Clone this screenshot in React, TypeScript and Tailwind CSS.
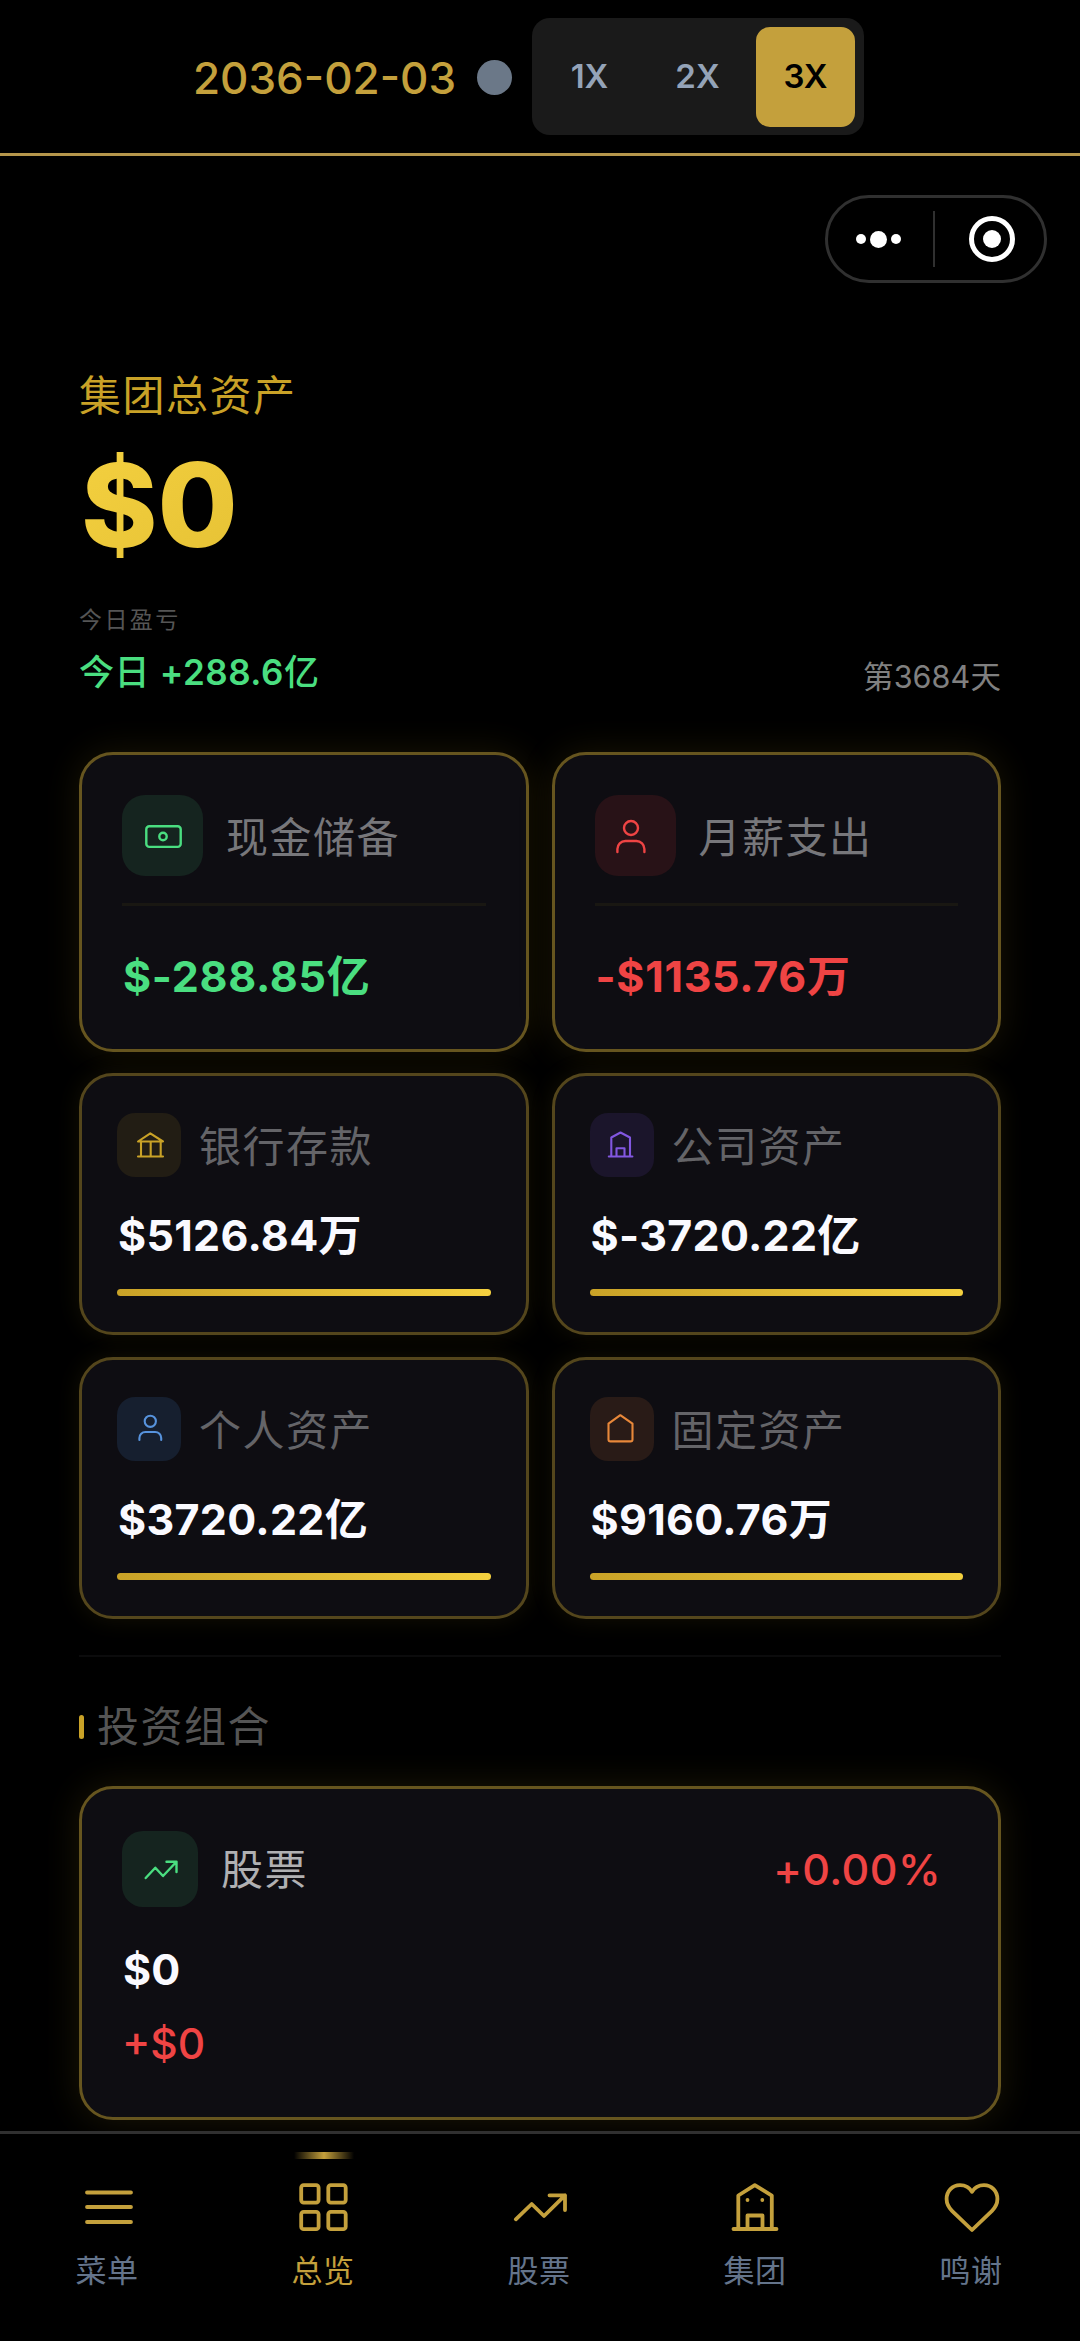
import React from 'react';

interface IconProps {
  size: number;
  className?: string;
  strokeWidth?: number;
  children: React.ReactNode;
}

const Icon: React.FC<IconProps> = ({ size, className = '', strokeWidth = 2.4, children }) => (
  <svg
    xmlns="http://www.w3.org/2000/svg"
    width={size}
    height={size}
    viewBox={`0 0 ${size} ${size}`}
    fill="none"
    stroke="currentColor"
    strokeWidth={strokeWidth}
    strokeLinecap="round"
    strokeLinejoin="round"
    className={`shrink-0 ${className}`}
  >
    {children}
  </svg>
);

const speeds = ['1X', '2X', '3X'];

const topCards = [
  {
    label: '现金储备',
    value: '$-288.85亿',
    color: 'text-[#4ade80]',
    box: 'bg-[#15241f]',
    icon: (
      <>
        <rect x="24.3" y="31.3" width="34.4" height="20.6" rx="3" />
        <circle cx="41" cy="41.5" r="3.7" />
      </>
    ),
  },
  {
    label: '月薪支出',
    value: '-$1135.76万',
    color: 'text-[#ef4444]',
    box: 'bg-[#281217]',
    icon: (
      <>
        <circle cx="36" cy="33" r="7" />
        <path d="M22.4 57v-3a8 8 0 0 1 8-8h11a8 8 0 0 1 8 8v3" />
      </>
    ),
  },
];

const assetCards = [
  {
    label: '银行存款',
    value: '$5126.84万',
    color: 'text-[#c9a227]',
    box: 'bg-[#221d14]',
    icon: <path d="M21 28.5 33.3 20.3 46 28.5ZM24 28.5v15M33.7 28.5v15M43.7 28.5v15M21 43.5h25" />,
  },
  {
    label: '公司资产',
    value: '$-3720.22亿',
    color: 'text-[#8257e0]',
    box: 'bg-[#1b152b]',
    icon: <path d="M18.8 43.5h23.6M21.3 43.5V24.5l9.2-5 9.5 5v19M26.5 43.5v-8.3h8v8.3" />,
  },
  {
    label: '个人资产',
    value: '$3720.22亿',
    color: 'text-[#5793dd]',
    box: 'bg-[#161f2f]',
    icon: (
      <>
        <circle cx="33.3" cy="24.3" r="5.6" />
        <path d="M22.4 43v-2a6 6 0 0 1 6-6h9.8a6 6 0 0 1 6 6v2" />
      </>
    ),
  },
  {
    label: '固定资产',
    value: '$9160.76万',
    color: 'text-[#e8883a]',
    box: 'bg-[#291b17]',
    icon: <path d="M18.5 26.7 30.3 18.2 42.5 26.7V42.4a2 2 0 0 1-2 2h-20a2 2 0 0 1-2-2Z" />,
  },
];

const tabs = [
  { label: '菜单', icon: <path d="M11 17.5h44M11 32h44M11 47h44" /> },
  {
    label: '总览',
    active: true,
    icon: (
      <>
        <rect x="9.2" y="10.2" width="17.4" height="17.4" rx="2.5" />
        <rect x="36.3" y="10.2" width="17.4" height="17.4" rx="2.5" />
        <rect x="9.2" y="36.8" width="17.4" height="17.4" rx="2.5" />
        <rect x="36.3" y="36.8" width="17.4" height="17.4" rx="2.5" />
      </>
    ),
  },
  { label: '股票', icon: <path d="M7.8 44.3 23.7 29 36 41 57 20.3M41.5 20.3H57V35" /> },
  {
    label: '集团',
    icon: (
      <>
        <path d="M9.5 54h43M14.3 54V20.5l16.5-10.3 17 10.3V54M23.5 54V40.5h15V54" />
        <path d="M23.5 25h.01M38.3 25h.01" />
      </>
    ),
  },
  {
    label: '鸣谢',
    icon: <path d="M32 16.8C29.5 12.5 25 10.2 20 10.2 12.3 10.2 6.6 16.2 6.6 24c0 5.5 2.3 8.7 5.4 11.8L32 55l20-19.2c3.1-3.1 5.4-6.3 5.4-11.8 0-7.8-5.7-13.8-13.4-13.8-5 0-9.5 2.3-12 6.6Z" />,
  },
];

const Header = () => (
  <header className="flex h-[156px] shrink-0 items-center border-b-3 border-[#b5964b] pl-[193px]">
    <span className="w-[284px] pt-0.5 text-[44px] leading-[60px] font-medium text-[#c4a03c]">2036-02-03</span>
    <span className="mt-0.5 size-[35px] rounded-full bg-[#6b7888]" />
    <div className="ml-5 flex gap-[9px] rounded-[18px] bg-[#1a1a1a] py-[8.5px] pr-[9px] pl-2">
      {speeds.map((speed) => (
        <button
          key={speed}
          className={`h-[100px] w-[99px] rounded-[14px] text-[33px] font-semibold ${
            speed === '3X' ? 'bg-[#c4a03c] text-black' : 'text-[#94a3b8]'
          }`}
        >
          {speed}
        </button>
      ))}
    </div>
  </header>
);

const Capsule = () => (
  <div className="flex h-[88px] w-[222px] items-center rounded-full border-3 border-[#303030]">
    <div className="flex flex-1 items-center justify-center gap-1 pr-1">
      <span className="size-[10px] rounded-full bg-white" />
      <span className="size-[17px] rounded-full bg-white" />
      <span className="size-[10px] rounded-full bg-white" />
    </div>
    <span className="h-14 w-0.5 bg-[#303030]" />
    <div className="flex w-[109px] justify-center pl-1">
      <span className="flex size-[46px] items-center justify-center rounded-full border-5 border-white">
        <span className="size-[18px] rounded-full bg-white" />
      </span>
    </div>
  </div>
);

const TabBar = () => (
  <nav className="z-10 grid h-[210px] shrink-0 grid-cols-5 border-t-3 border-[#303030] bg-black">
    {tabs.map((tab) => (
      <button key={tab.label} className="relative flex flex-col items-center pt-[41px]">
        {tab.active && (
          <span className="absolute top-[18px] left-1/2 h-[7px] w-[60px] -translate-x-1/2 bg-linear-to-r from-transparent via-[#c4a03c] to-transparent" />
        )}
        <Icon size={64} strokeWidth={3.8} className="text-[#c4a03c]">
          {tab.icon}
        </Icon>
        <span
          className={`mt-[14px] pr-0.5 text-[31px] leading-9 tracking-[0.6px] ${
            tab.active ? 'text-[#c4a03c]' : 'text-[#64748b]'
          }`}
        >
          {tab.label}
        </span>
      </button>
    ))}
  </nav>
);

export default function App() {
  return (
    <div className="flex h-[2341px] w-[1080px] flex-col overflow-hidden bg-black font-['Inter','Noto_Sans_CJK_SC',sans-serif]">
      <Header />

      <main className="min-h-0 flex-1 overflow-hidden px-[79px] pt-[39px]">
        <div className="-mr-[46px] flex justify-end">
          <Capsule />
        </div>

        <h1 className="mt-[83px] text-[42px] leading-[60px] font-normal tracking-[1.5px] text-[#c9a227]">集团总资产</h1>
        <div className="mt-[19px] w-fit bg-linear-to-br from-[#f4d03f] to-[#e6c235] bg-clip-text pl-0.5 text-[116px] leading-[120px] font-extrabold text-transparent">
          $0
        </div>
        <div className="mt-10 flex items-end justify-between">
          <div>
            <p className="text-[23px] leading-[30px] tracking-[2.4px] text-[#555555]">今日盈亏</p>
            <p className="mt-[15px] text-[35px] leading-[44px] font-medium tracking-[0.5px] text-[#4ade80]">
              今日 <span className="font-semibold">+288.6</span>亿
            </p>
          </div>
          <span className="text-[30.5px] leading-[34px] tracking-[0.1px] text-[#808080]">第3684天</span>
        </div>

        <section className="mt-[58px] grid grid-cols-2 gap-x-[23px]">
          {topCards.map((card) => (
            <div
              key={card.label}
              className="h-[300px] rounded-[34px] border-3 border-[#66551f] bg-[#0e0d12] p-10 shadow-[0_0_36px_rgba(201,162,39,0.13)]"
            >
              <div className="flex items-center gap-[23px]">
                <div className={`size-[81px] rounded-[23px] ${card.box} ${card.color}`}>
                  <Icon size={81}>{card.icon}</Icon>
                </div>
                <span className="pt-1 text-[42px] leading-[60px] tracking-[1.5px] text-[#77777b]">{card.label}</span>
              </div>
              <div className="mt-[27px] h-[3px] bg-[#191712]" />
              <p className={`mt-10 pl-px text-[43px] leading-[60px] font-bold tracking-[0.7px] ${card.color}`}>
                {card.value}
              </p>
            </div>
          ))}
        </section>

        <section className="mt-[21px] grid grid-cols-2 gap-x-[23px] gap-y-[22px]">
          {assetCards.map((card) => (
            <div
              key={card.label}
              className="h-[262px] rounded-[34px] border-3 border-[#54461c] bg-[#0e0d12] px-[35px] pt-[37px] shadow-[0_0_24px_rgba(201,162,39,0.10)]"
            >
              <div className="flex items-center gap-[18px]">
                <div className={`size-16 rounded-[18px] ${card.box} ${card.color}`}>
                  <Icon size={64} strokeWidth={2.1}>{card.icon}</Icon>
                </div>
                <span className="pt-1 text-[42px] leading-[60px] tracking-[1.5px] text-[#646468]">{card.label}</span>
              </div>
              <p className="mt-[33px] pl-px text-[43px] leading-[50px] font-bold tracking-[0.3px] text-[#fafaff]">
                {card.value}
              </p>
              <div className="mt-[29px] h-[7px] rounded-full bg-linear-to-r from-[#c9a227] to-[#f4d03f]" />
            </div>
          ))}
        </section>

        <div className="mt-9 h-0.5 bg-[#0b0b0c]" />

        <div className="mt-[45px] flex items-center gap-[13px]">
          <span className="h-6 w-[5px] rounded-sm bg-[#c9a227]" />
          <h2 className="text-[42px] leading-[50px] font-normal tracking-[1.5px] text-[#555555]">投资组合</h2>
        </div>

        <section className="mt-[34px] h-[334px] rounded-[34px] border-3 border-[#66551f] bg-[#0e0d12] px-10 pt-[42px] shadow-[0_0_36px_rgba(201,162,39,0.14)]">
          <div className="flex items-center">
            <div className="size-[76px] rounded-[21px] bg-[#15241f] text-[#4ade80]">
              <Icon size={76}>
                <path d="M23.7 47 33.3 36.7 41 45 54.5 30.7M44.5 30.7h10V41" />
              </Icon>
            </div>
            <span className="ml-[23px] pt-0.5 text-[42px] leading-[60px] tracking-[1.5px] text-[#b0b0b2]">股票</span>
            <span className="mr-[17px] ml-auto text-[43px] leading-[60px] font-medium tracking-[0.4px] text-[#ef4444]">
              +0.00%
            </span>
          </div>
          <p className="mt-[37px] pl-px text-[43px] leading-[50px] font-bold text-[#fafaff]">$0</p>
          <p className="mt-[25px] text-[42.5px] leading-[50px] font-medium text-[#ef4444]">+$0</p>
        </section>
      </main>

      <TabBar />
    </div>
  );
}
